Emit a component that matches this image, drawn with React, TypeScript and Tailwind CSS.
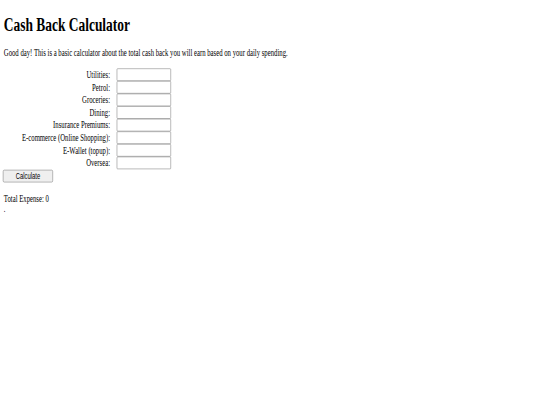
import React, { useState } from 'react';

const FIELDS = [
  'Utilities',
  'Petrol',
  'Groceries',
  'Dining',
  'Insurance Premiums',
  'E-commerce (Online Shopping)',
  'E-Wallet (topup)',
  'Oversea',
];

export default function App() {
  const [values, setValues] = useState<Record<string, string>>({});
  const [total, setTotal] = useState(0);

  const calculate = () => {
    const sum = FIELDS.reduce((acc, f) => acc + (parseFloat(values[f]) || 0), 0);
    setTotal(sum);
  };

  return (
    <div className="w-[540px] h-[405px] overflow-hidden bg-white">
      <div className="w-[1286px] h-[675px] origin-top-left scale-x-[0.42] scale-y-60 text-black font-['Liberation_Serif',serif]">
        <div className="pl-[9px] pt-2">
          <h1 className="mt-[14px] mb-[21px] text-[32px] font-bold leading-[37px]">Cash Back Calculator</h1>
          <p className="my-4 text-base leading-[18px]">
            Good day! This is a basic calculator about the total cash back you will earn based on your daily spending.
          </p>
          <div className="grid grid-cols-[253px_auto] gap-x-[16px] justify-start">
            {FIELDS.map((f) => (
              <React.Fragment key={f}>
                <label className="text-right text-base leading-[21px] h-[21px]">{f}:</label>
                <input
                  type="text"
                  value={values[f] || ''}
                  onChange={(e) => setValues((prev) => ({ ...prev, [f]: e.target.value }))}
                  className="w-[129px] h-[21px] border border-[#767676] rounded-[2px] bg-white px-0.5 text-[13px]"
                />
              </React.Fragment>
            ))}
          </div>
          <button
            onClick={calculate}
            className="w-[119px] h-[21px] mt-px -ml-[2px] bg-[#efefef] border border-[#767676] rounded-[3px] text-[14px] font-['Liberation_Sans',sans-serif]"
          >
            Calculate
          </button>
          <p className="my-4 text-base leading-[18px]">
            Total Expense: {total}
            <br />.
          </p>
        </div>
      </div>
    </div>
  );
}
